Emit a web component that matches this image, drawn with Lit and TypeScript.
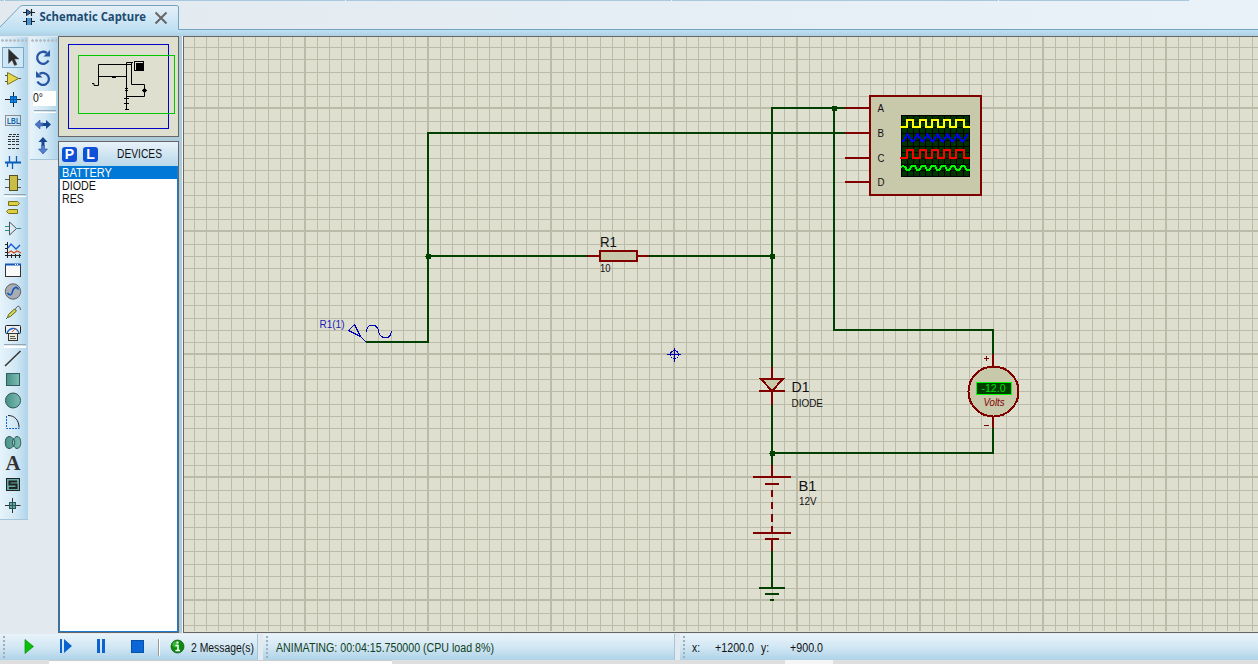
import { LitElement, html, svg, css } from "lit";
import { customElement } from "lit/decorators.js";

const FONT = "Liberation Sans, Arial, sans-serif";

const fitted = (text: string, width: number, size = 12.5, height = 16, base = 12, cls = "") => html`
  <svg class="fit ${cls}" width=${width} height=${height} overflow="visible">
    <text x="0" y=${base} font-size=${size} textLength=${width} lengthAdjust="spacingAndGlyphs">${text}</text>
  </svg>`;

/* Tool icons are drawn on a 24 x 21 canvas with the centre at 12, 10.5 */
const tools: Record<string, any> = {
  select: svg`<path d="M7.500 2v14.500l3.500-3.500 2.500 5.500 2.500-1-2.500-5.500h4.500z" fill="#2c2c2c" stroke="#555" stroke-width=".5"/>`,
  component: svg`<path d="M4 7.500h3M4 13.500h3M17 10.500h3" stroke="#555"/><path d="M6.500 4.500v12l11-6z" fill="#e5d84f" stroke="#7c7420"/>`,
  junction: svg`<path d="M4 10.500h16M12.500 3v15" stroke="#222"/><rect x="9.500" y="7.500" width="6" height="6" fill="#1683e8" stroke="#075aa8"/><path d="M12.500 8v5M10 10.500h5" stroke="#075aa8"/>`,
  label: svg`<rect x="4.500" y="5.500" width="15" height="10" fill="none" stroke="#333" stroke-dasharray="1 1"/><text x="6" y="14" font-size="9.500" font-weight="700" fill="#1260a8" textLength="13" lengthAdjust="spacingAndGlyphs">LBL</text>`,
  script: svg`<path d="M8 3.500h10M7 5.500h11M7 8.500h12M7 10.500h12M7 13.500h11M7 17.500h11" stroke="#333" stroke-dasharray="3 1"/>`,
  bus: svg`<path d="M4 10.500h16" stroke="#0a5cb8" stroke-width="2"/><path d="M8.500 4v6M15.500 4v6M11.500 11v6M6.500 11v4" stroke="#0a5cb8" stroke-width="1.300"/>`,
  subcircuit: svg`<path d="M4 6.500h16M4 14.500h16" stroke="#555"/><rect x="8.500" y="2.500" width="8" height="15" fill="#c9bd45" stroke="#555020"/>`,
  terminal: svg`<path d="M7.500 4.500h9l2 2-2 2h-9z" fill="#dccf42" stroke="#777020"/><path d="M16.500 12.500h-9l-2 2 2 2h9z" fill="#dccf42" stroke="#777020"/>`,
  pin: svg`<path d="M4 8.500h4M4 12.500h4M16 10.500h4" stroke="#299092"/><path d="M8.500 4v13l7-6.500z" fill="#dbeaf5" stroke="#555"/>`,
  graph: svg`<path d="M6.500 3v16M4 16.500h16M4 5.500h3M4 9.500h3M4 13.500h3M10.500 15v4M14.500 15v4M18.500 15v4" stroke="#222"/><path d="M7 9l3-4 5 5 4-4" fill="none" stroke="#145bd0" stroke-width="1.300"/><path d="M7 14l3-2 3 2 3-2 4 2" fill="none" stroke="#d34a20" stroke-width="1.300"/>`,
  popup: svg`<rect x="4.500" y="4.500" width="15" height="12" fill="#fafafa" stroke="#333"/><path d="M4 4.500h16" stroke="#1257bd" stroke-width="2"/><path d="M14 4.500h4" stroke="#fff" stroke-dasharray="1 1"/>`,
  generator: svg`<circle cx="12" cy="10.500" r="7.700" fill="#a9adb3" stroke="#5e6268"/><path d="M6.500 12c2 3 4.500 2 5-1.500s4-6 6-2" fill="none" stroke="#0d58bd" stroke-width="1.600"/>`,
  probe: svg`<path d="M5 17l3-3M14 8c2-5 5-5 5.500 0" fill="none" stroke="#555"/><path d="M6.500 15.500l1-3 6-5.500 2 2-6 5.500z" fill="#d4d84f" stroke="#626523"/>`,
  instrument: svg`<rect x="4.500" y="2.500" width="15" height="8" rx="1" fill="#edf0ee" stroke="#222"/><path d="M6 10c2-5 9-7 12 0" fill="none" stroke="#1764c2" stroke-width="1.300"/><path d="M11 9l4-4" stroke="#dc512d"/><rect x="7.500" y="10.500" width="9" height="7" fill="#ece9d4" stroke="#333"/><path d="M9 13.500h5M9 15.500h6" stroke="#555"/>`,
  line: svg`<path d="M4 18L19.500 3" stroke="#333" stroke-width="1.500"/>`,
  box: svg`<rect x="5.500" y="4.500" width="13" height="12" fill="url(#teal)" stroke="#345d5d"/>`,
  circle: svg`<circle cx="12" cy="10.500" r="7.500" fill="url(#teal)" stroke="#2c5555"/>`,
  arc: svg`<path d="M5.500 5v12.500h13" fill="none" stroke="#1262cf" stroke-dasharray="2 1"/><path d="M7 4.500c7 0 11 5 11 12" fill="none" stroke="#222"/>`,
  path: svg`<path d="M8 4.500c3 0 3 2 4.500 2S14 4.500 16 4.500c5 0 5 12 0 12-2 0-2-2-3.500-2s-1.500 2-4.500 2c-5 0-5-12 0-12z" fill="url(#teal)" stroke="#2c5555"/><path d="M12.500 7c-1.500 2-1.500 5 0 7 1.500-2 1.500-5 0-7z" fill="#91cfc8" stroke="#2c5555"/>`,
  text: svg`<text x="4.500" y="17" font-family="Liberation Serif, serif" font-size="20" font-weight="700" fill="#333" textLength="15" lengthAdjust="spacingAndGlyphs">A</text>`,
  symbol: svg`<rect x="5.500" y="4.500" width="13" height="12" fill="#62aaa3" stroke="#222"/><path d="M16 7.500H8.500v3H15.500v3.500H8" fill="none" stroke="#222" stroke-width="2"/>`,
  marker: svg`<path d="M4 10.500h15.500M11.500 3v15" stroke="#333"/><rect x="8.500" y="7.500" width="6" height="6" fill="#68aaa4" stroke="#285555"/><path d="M9 10.500h5M11.500 8v5" stroke="#285555"/>`,
  cw: svg`<path d="M17.500 13.500A6 6 0 1 1 15.800 6" fill="none" stroke="#2856a4" stroke-width="2.300"/><path d="M19 3v6.500h-6.500z" fill="#2856a4"/>`,
  ccw: svg`<path d="M8.500 6A6 6 0 1 1 6.500 13.500" fill="none" stroke="#2856a4" stroke-width="2.300"/><path d="M5 3v6.500h6.500z" fill="#2856a4"/>`,
  flipH: svg`<path d="M4 10.500l5-4.500v3h3v3H9v3z" fill="#4c75c2" stroke="#2d51a0" stroke-width=".6"/><path d="M20 10.500L15 6v3h-3v3h3v3z" fill="#17478f"/>`,
  flipV: svg`<path d="M12 2L7.500 7h3v4h3V7h3z" fill="#17478f"/><path d="M12 19l-4.500-5h3v-3.500h3V14h3z" fill="#5480cc" stroke="#2d51a0" stroke-width=".6"/>`,
};

@customElement("tool-icon")
class ToolIcon extends LitElement {
  static properties = { name: {} };
  declare name: string;
  static styles = css`
    :host { display: block; width: 24px; height: 21px; flex: none; }
    svg { display: block; font-family: "Liberation Sans", sans-serif; }
  `;
  render() {
    return html`<svg width="24" height="21" viewBox="0 0 24 21">
      <defs><linearGradient id="teal"><stop stop-color="#479189"/><stop offset="1" stop-color="#7dbcb3"/></linearGradient></defs>
      ${tools[this.name]}</svg>`;
  }
}

const LEFT = 184, TOP = 37, RIGHT = 1258, BOTTOM = 631;

function grid() {
  const minor: string[] = [], major: string[] = [];
  for (let k = -9; k < 78; k++) {
    const x = 304.5 + k * 12.3;
    if (k % 10 === 0) major.push(`M${Math.floor(x + 0.01)} ${TOP}h2V${BOTTOM}h-2z`);
    else minor.push(`M${Math.round(x)} ${TOP}h1V${BOTTOM}h-1z`);
  }
  for (let k = -5; k < 43; k++) {
    const y = 108.5 + k * 12.3;
    if (k % 10 === 0) major.push(`M${LEFT} ${Math.round(y - 1.4)}H${RIGHT}v2H${LEFT}z`);
    else minor.push(`M${LEFT} ${Math.round(y - 0.01)}H${RIGHT}v1H${LEFT}z`);
  }
  return svg`<path fill="#bbbbaa" d=${minor.join("") + major.join("")} />`;
}

const node = (x: number, y: number) => svg`<path fill="#004000" d="M${x - 2} ${y - 2}h5v5h-5v-2h-1v-1h1z"/>`;
const label = (x: number, y: number, text: string, width: number, size = 10, cls = "ink") =>
  svg`<text class=${cls} x=${x} y=${y} font-size=${size} textLength=${width} lengthAdjust="spacingAndGlyphs">${text}</text>`;

function zigzag(x0: number, n: number, step: number, hi: number, lo: number) {
  return Array.from({ length: n }, (_, i) => `${x0 + i * step},${i % 2 ? hi : lo}`).join(" ");
}
function pulses(hi: number, lo: number) {
  const edges = [907, 913, 920, 926, 932, 938, 944, 950, 956, 964];
  return `M900 ${lo}` + edges.map((x, i) => `H${x}V${i % 2 ? lo : hi}`).join("") + "H970";
}

@customElement("schematic-sheet")
class SchematicSheet extends LitElement {
  static styles = css`
    :host { display: block; }
    svg { display: block; font-family: "Liberation Sans", sans-serif; shape-rendering: crispEdges; }
    .wire { fill: none; stroke: #004000; stroke-width: 2; }
    .part { fill: none; stroke: #800000; stroke-width: 2; }
    .body { fill: #c8c8aa; stroke: #800000; stroke-width: 2; }
    .pen { fill: none; stroke: #0000b4; stroke-width: 1; }
    .ink { fill: #111; }
    .blue { fill: #2020b4; }
    .lcd { fill: #00e000; }
    .volts { fill: #800000; font-style: italic; }
    .trace { fill: none; stroke-width: 2; }
  `;
  render() {
    return html`<svg width="1074" height="595" viewBox="184 37 1074 595">
      <rect x="184" y="37" width="1074" height="595" fill="#dfdfd0"/>
      ${grid()}
      <path class="wire" d="M366 342H428V133H845M428 256H587M649 256H772M772 367V108H845M834 108V330H993V354M772 405V465M772 453H993V428M772 551V588M759 588H785M765 594H779M770 600H774"/>
      <path class="part" d="M845 108H870M845 133H870M845 158H870M845 182H870M587 256H599M638 256H649M772 367V379M759 391H785M772 391V405M772 465V477M753 477H791M765 484H779M772 490V497M772 502V509M772 514V522M772 526V533M753 533H791M765 539H779M772 539V551M993 354V366M993 416V428"/>
      ${node(428, 256)}${node(772, 256)}${node(834, 108)}${node(772, 453)}
      <rect class="body" x="600" y="251" width="37" height="10"/>
      <path class="body" d="M761 379H783L772 391z"/>
      <rect class="body" x="870" y="96" width="111" height="99"/>
      ${label(877.5, 112, "A", 6.5)}${label(877.5, 137, "B", 6.5)}${label(877.5, 162, "C", 7)}${label(877.5, 186, "D", 7)}
      <rect x="901" y="115" width="69" height="62" fill="#003200"/>
      <path stroke="#000" fill="none" d="M901.500 115V177M907.500 115V177M913.500 115V177M919.500 115V177M925.500 115V177M932.500 115V177M938.500 115V177M944.500 115V177M950.500 115V177M956.500 115V177M963.500 115V177M969.500 115V177M901 115.500H970M901 121.500H970M901 127.500H970M901 133.500H970M901 140.500H970M901 146.500H970M901 152.500H970M901 158.500H970M901 164.500H970M901 170.500H970M901 176.500H970"/>
      <path class="trace" stroke="#ff0" d=${pulses(120, 127)}/>
      <polyline class="trace" stroke="#00f" stroke-linejoin="round" points=${zigzag(902.5, 14, 5, 134.5, 142)}/>
      <path class="trace" stroke="#f00" d=${pulses(150, 158)}/>
      <polyline class="trace" stroke="#0f0" stroke-linejoin="round" points="901,167 903,166 905,167 907,170 909,170 912,166 915,166 917,170 919,170 922,166 925,166 927,170 929,170 932,166 935,166 937,170 939,170 942,166 945,166 947,170 949,170 952,166 954,166 957,170 959,170 962,166 964,166 967,170 970,170"/>
      <circle class="body" cx="993.500" cy="391.500" r="25"/>
      <rect x="976.500" y="382.500" width="35" height="12" fill="#003c00" stroke="#0f0"/>
      ${label(981.5, 392, "-12.0", 24, 10, "lcd")}
      ${label(983.5, 406, "Volts", 21, 10, "volts")}
      <path stroke="#800000" d="M984 358.500H989M986.500 356V361M984 425.500H989"/>
      ${label(600, 247, "R1", 17, 15)}${label(600, 272, "10", 10.500, 10)}
      ${label(791.5, 392, "D1", 18, 15)}${label(791.5, 407, "DIODE", 31.5, 10)}
      ${label(798.5, 491, "B1", 18, 15)}${label(799, 505, "12V", 17.5, 10)}
      ${label(319.5, 328, "R1(1)", 25, 10, "blue")}
      <path class="pen" d="M348.500 330.500L354.500 324.500L360.500 336.500zM360.500 336.500L366.500 342.500M366.500 332C367 323 377 323 378.500 331S390 341 391.500 331.500"/>
      <path class="pen" d="M667 354.500H681M674.500 348V362"/><circle class="pen" cx="674.500" cy="354.500" r="4"/>
    </svg>`;
  }
}

@customElement("app-root")
class AppRoot extends LitElement {
  static styles = css`
    :host { display: flex; flex-direction: column; width: 1258px; height: 664px; overflow: hidden; background: #e2eaf0; font-family: "Liberation Sans", sans-serif; }
    * { box-sizing: border-box; }
    svg { display: block; flex: none; }
    .fit { font-family: "Liberation Sans", sans-serif; fill: #111; }
    .top { height: 30px; background: linear-gradient(90deg, #e2eaf0, #e9f2f9); }
    .strip { height: 6px; background: linear-gradient(#bde0f4, #aed0e2); flex: none; }
    .main { display: flex; height: 597px; }
    .bars { display: flex; align-items: flex-start; width: 58px; gap: 2px; padding-top: 1px; }
    .bar { width: 28px; background: linear-gradient(90deg, #e6f3fb, #d2e8f5 55%, #afd4ea); border-bottom: 1px solid #a5c6da; display: flex; flex-direction: column; padding-left: 1px; }
    .tall { height: 483px; }
    .short { height: 123px; }
    .grip { height: 10px; margin: 0 1px 0 0; padding-top: 2px; flex: none; }
    .dots { height: 3px; background: radial-gradient(circle at 1.500px 1.500px, #b3bcc4 1px, transparent 1.600px) 0 0 / 4px 3px; }
    .sep { height: 3px; margin: 0 2px 0 3px; border-top: 1px solid #99a4ac; border-bottom: 1px solid #fff; flex: none; }
    .sep.wide { height: 4px; border-bottom-width: 2px; }
    .active { width: 22px; height: 21px; margin-left: 1px; border: 1px solid #7da9c8; background: #cfe6f5; flex: none; }
    .active tool-icon { margin: -1px 0 0 -2px; }
    .angle { width: 23px; height: 15px; margin: 2px 0 4px 2px; background: #fff; flex: none; padding: 0; }
    .short .sep { margin-bottom: 1px; }
    .side { width: 125px; display: flex; flex-direction: column; background: #aecbdc; gap: 4px; padding-right: 3px; border-right: 1px solid #f5f9fb; }
    .preview { height: 101px; border: 1px solid #666; background: #dfdfd0; }
    .devices { height: 492px; border: 1px solid #666; background: #fff; display: flex; flex-direction: column; }
    .head { height: 24px; flex: none; display: flex; align-items: center; background: linear-gradient(#e8f2fa, #b8d8ea); padding-left: 3px; }
    .key { width: 15px; height: 15px; border-radius: 3px; background: #0e50d8; color: #fff; font: bold 14px/15px "Liberation Sans", sans-serif; text-align: center; margin-right: 6px; }
    .title { margin-left: 13px; }
    .list { flex: 1; border: 1px solid #1c7ad0; border-top: 0; }
    .row { height: 13px; padding-left: 2px; }
    .picked { background: #0078d7; }
    .picked .fit { fill: #fff; }
    .sheet { flex: 1; border: 1px solid #666; border-right: 0; height: 597px; overflow: hidden; }
    .status { height: 27px; display: flex; padding-top: 1px; flex: none; }
    .panel { height: 26px; display: flex; align-items: center; background: linear-gradient(#e9f3fa, #d2e7f4 50%, #aed3e8); border-right: 1px solid #a5c6da; margin-right: 5px; }
    .controls { width: 258px; }
    .anim { width: 412px; }
    .anim .fit { fill: #104020; margin-left: 7px; }
    .coords { flex: 1; margin: 0; border: 0; }
    .foot { height: 4px; display: flex; background: #dedede; }
    .foot span { display: block; height: 4px; }
    .f1 { width: 49px; }
    .f2 { width: 343px; background: #fdfdfd; border-top: 1px solid #ccc; }
    .f3 { width: 393px; }
    .f4 { width: 48px; background: #f5f5f5; }
    .vgrip { width: 4px; height: 24px; margin-left: 2px; background: radial-gradient(circle at 2px 2px, #a5afb7 1px, transparent 1.600px) 0 0 / 4px 4px; }
    .m1 { margin-left: 6px; }
    .m2 { margin-left: 15px; }
    .m3 { margin-left: 7px; }
    .m4 { margin-left: 21px; }
  `;

  icons(names: string[]) {
    return names.map((n) => html`<tool-icon .name=${n}></tool-icon>`);
  }

  render() {
    return html`
      <svg class="top" width="1258" height="30" font-family=${FONT}>
        <defs><linearGradient id="tab" x2="0" y2="1"><stop stop-color="#e6f0f8"/><stop offset="1" stop-color="#bfe0f3"/></linearGradient></defs>
        <path d="M0 .500H1189" stroke="#a9c8dd"/><path d="M4.500 0V1M345.500 0V1M671.500 0V1M998.500 0V1" stroke="#eef5fa"/>
        <path d="M0 27L20 6.500Q21 5.500 23 5.500H178.500V30H0z" fill="url(#tab)"/>
        <path d="M0 27L20 6.500Q21 5.500 23 5.500H176Q178.500 5.500 178.500 7V29.500H1258" fill="none" stroke="#73a3bd"/>
        <path d="M23 12.500H35M23 21.500H27M31 21.500H35M31.500 9V16" stroke="#222" stroke-width="1.200"/><path d="M26.500 9.500V15.500L31 12.500z" fill="#1a78cc" stroke="#222"/><path d="M26.500 18V25M31.500 18V25" stroke="#222" stroke-width="1"/><path d="M28 18V25M30 18V25" stroke="#1a78cc" stroke-width="1.500"/>
        <text x="39.500" y="21" font-family="Open Sans, sans-serif" font-size="12.500" font-weight="700" fill="#1d4b70" textLength="106.500" lengthAdjust="spacingAndGlyphs">Schematic Capture</text>
        <path d="M155.500 12.500L166.500 23.500M166.500 12.500L155.500 23.500" stroke="#666" stroke-width="2"/>
      </svg>
      <div class="strip"></div>
      <div class="main">
        <div class="bars">
          <div class="bar tall">
            <div class="grip"><div class="dots"></div></div>
            <div class="active"><tool-icon .name=${"select"}></tool-icon></div>
            ${this.icons(["component", "junction", "label", "script", "bus", "subcircuit"])}
            <div class="sep"></div>
            ${this.icons(["terminal", "pin", "graph", "popup", "generator", "probe", "instrument"])}
            <div class="sep wide"></div>
            ${this.icons(["line", "box", "circle", "arc", "path", "text", "symbol", "marker"])}
          </div>
          <div class="bar short">
            <div class="grip"><div class="dots"></div></div>
            ${this.icons(["cw", "ccw"])}
            <div class="angle">${fitted("0°", 10, 12.5, 15, 11)}</div>
            <div class="sep"></div>
            ${this.icons(["flipH", "flipV"])}
          </div>
        </div>
        <div class="side">
          <div class="preview">
            <svg width="118" height="99" viewBox="59 37 118 99" fill="none">
              <rect x="68.500" y="44.500" width="100" height="84" stroke="#0000c8"/>
              <rect x="78.500" y="55.500" width="96" height="58" stroke="#00c800"/>
              <path stroke="#000" d="M92 83.500H94V85.500H98.500V64.500H132M98 76.500H126M112 77.500H116M126.500 110V62.500H133M131.500 62V84.500H144.500V96.500H126M124 98.500H129M124 103.500H129M125 109.500H129M125 88.500H128M125 90.500H128M142 90.500H147"/>
              <circle cx="144.500" cy="90.500" r="2" fill="#000"/>
              <rect x="134.500" y="61.500" width="9" height="9" stroke="#000"/><rect x="136" y="63" width="8" height="8" fill="#000"/>
            </svg>
          </div>
          <div class="devices">
            <div class="head"><span class="key">P</span><span class="key">L</span><span class="title">${fitted("DEVICES", 45)}</span></div>
            <div class="list">
              <div class="row picked">${fitted("BATTERY", 50, 12.5, 13, 11)}</div>
              <div class="row">${fitted("DIODE", 34, 12.5, 13, 11)}</div>
              <div class="row">${fitted("RES", 22, 12.5, 13, 11)}</div>
            </div>
          </div>
        </div>
        <div class="sheet"><schematic-sheet></schematic-sheet></div>
      </div>
      <div class="status">
        <div class="panel controls">
          <span class="vgrip"></span>
          <svg width="185" height="26" viewBox="6 634 185 26">
            <path d="M25 639.500V653.500L33.500 646.500z" fill="#0bc00b" stroke="#079007" stroke-width=".7"/>
            <path d="M60 639h2v14h-2zM64 639v14l8-7z" fill="#0b63d0"/>
            <path d="M97 639h3v14h-3zM102 639h3v14h-3z" fill="#0b63d0"/>
            <rect x="131.500" y="640.500" width="12" height="12" fill="#0b67d8" stroke="#0750a5"/>
            <path d="M158.500 639V656" stroke="#999"/><path d="M159.500 639V656" stroke="#fff"/>
            <circle cx="177.500" cy="646.500" r="6.500" fill="#0b8c0b" stroke="#075007" stroke-width=".7"/><circle cx="175.500" cy="644.500" r="3" fill="#36b636"/>
            <path d="M175.500 645.500H178V650M175.500 650.500H180" stroke="#fff" stroke-width="1.500" fill="none"/><rect x="176.500" y="641.500" width="2" height="2" fill="#fff"/>
          </svg>
          ${fitted("2 Message(s)", 63, 12.5, 16, 13)}
        </div>
        <div class="panel anim"><span class="vgrip"></span>${fitted("ANIMATING: 00:04:15.750000 (CPU load 8%)", 218, 12.5, 16, 13)}</div>
        <div class="panel coords"><span class="vgrip"></span>
          <span class="m1">${fitted("x:", 8, 12.5, 16, 13)}</span><span class="m2">${fitted("+1200.0", 39, 12.5, 16, 13)}</span>
          <span class="m3">${fitted("y:", 8, 12.5, 16, 13)}</span><span class="m4">${fitted("+900.0", 33, 12.5, 16, 13)}</span>
        </div>
      </div>
      <div class="foot"><span class="f1"></span><span class="f2"></span><span class="f3"></span><span class="f4"></span></div>`;
  }
}
